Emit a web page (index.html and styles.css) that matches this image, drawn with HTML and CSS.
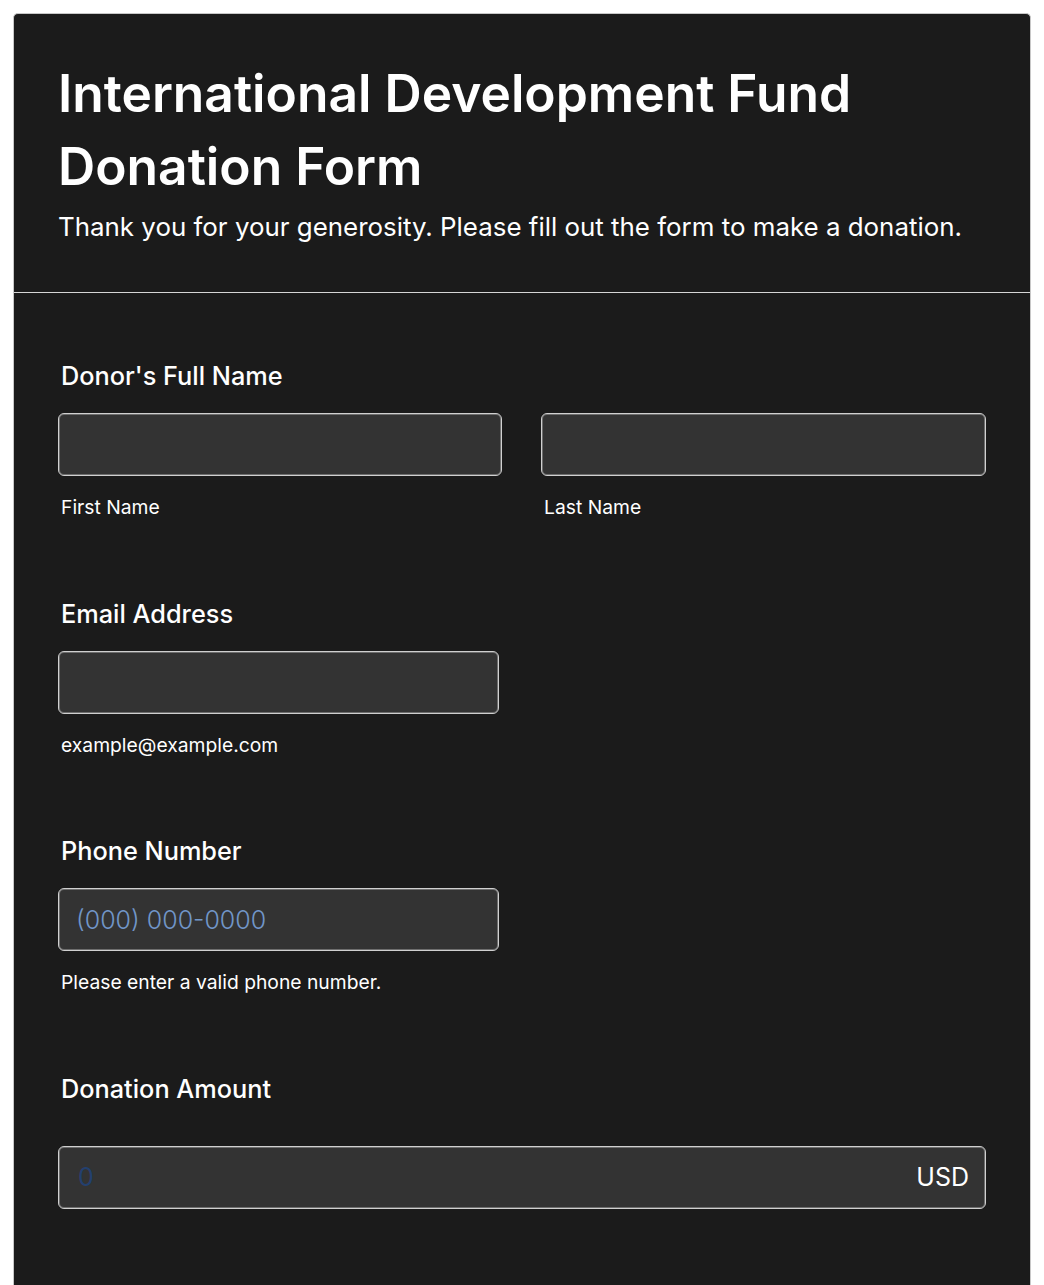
FILE: index.html
```html
<!DOCTYPE html>
<html lang="en">
<head>
<meta charset="utf-8">
<title>International Development Fund Donation Form</title>
<link rel="stylesheet" href="styles.css">
</head>
<body>
<div class="card">
  <header class="header">
    <h1 class="title">International Development Fund Donation Form</h1>
    <p class="subtitle">Thank you for your generosity. Please fill out the form to make a donation.</p>
  </header>
  <form class="form">
    <section class="field">
      <label class="label">Donor's Full Name</label>
      <div class="name-row">
        <div class="col">
          <input class="input" type="text">
          <span class="sublabel">First Name</span>
        </div>
        <div class="col">
          <input class="input" type="text">
          <span class="sublabel">Last Name</span>
        </div>
      </div>
    </section>
    <section class="field">
      <label class="label">Email Address</label>
      <div class="half">
        <input class="input" type="email">
        <span class="sublabel">example@example.com</span>
      </div>
    </section>
    <section class="field">
      <label class="label">Phone Number</label>
      <div class="half">
        <input class="input phone" type="tel" placeholder="(000) 000-0000">
        <span class="sublabel">Please enter a valid phone number.</span>
      </div>
    </section>
    <section class="field amount-field">
      <label class="label">Donation Amount</label>
      <div class="amount">
        <input class="amount-input" type="text" placeholder="0">
        <span class="currency">USD</span>
      </div>
    </section>
  </form>
</div>
</body>
</html>
```
FILE: styles.css
```css
* { box-sizing: border-box; }
html, body { margin: 0; padding: 0; background: #ffffff; }
body {
  font-family: Inter, "Noto Sans", "Liberation Sans", sans-serif;
  color: #ffffff;
  padding: 13px 13px 0;
}
.card {
  background: #1b1b1b;
  border: 1px solid #c8c8c8;
  border-bottom: none;
  border-radius: 5px 5px 0 0;
  min-height: 1272px;
}
.header {
  padding: 43px 44px 49px;
  border-bottom: 1px solid #d6d6d6;
}
.title {
  margin: 0;
  font-size: 51.5px;
  line-height: 73px;
  font-weight: 600;
}
.subtitle {
  margin: 8px 0 0;
  font-size: 25.9px;
  line-height: 32px;
  font-weight: 400;
}
.form {
  padding: 67px 44px 0;
}
.field {
  display: flex;
  flex-direction: column;
  margin-bottom: 78.5px;
}
.label {
  font-size: 25.3px;
  line-height: 32px;
  font-weight: 500;
  padding-left: 3px;
  margin-bottom: 21px;
}
.name-row {
  display: grid;
  grid-template-columns: 444px 445px;
  column-gap: 39px;
}
.col, .half {
  display: flex;
  flex-direction: column;
}
.half { width: 441px; }
.input, .amount {
  height: 63px;
  width: 100%;
  background: #333333;
  border: 1px solid #d0d0d0;
  box-shadow: inset 0 0 0 1px #6e6e6e;
  border-radius: 6px;
  color: #ffffff;
  font-family: inherit;
  font-size: 25px;
  padding: 0 17px;
  outline: none;
}
.phone::placeholder { color: #7196c8; font-weight: 300; }
.sublabel {
  font-size: 19.3px;
  line-height: 24px;
  padding-left: 3px;
  margin-top: 19px;
}
.amount-field .label { margin-bottom: 41px; }
.amount {
  display: flex;
  align-items: center;
  padding: 0 16px 0 19px;
}
.amount-input {
  flex: 1;
  background: transparent;
  border: none;
  outline: none;
  font-family: inherit;
  font-size: 25px;
  color: #ffffff;
  padding: 0;
}
.amount-input::placeholder { color: #23406f; }
.currency {
  font-size: 25px;
  color: #ffffff;
}
```
